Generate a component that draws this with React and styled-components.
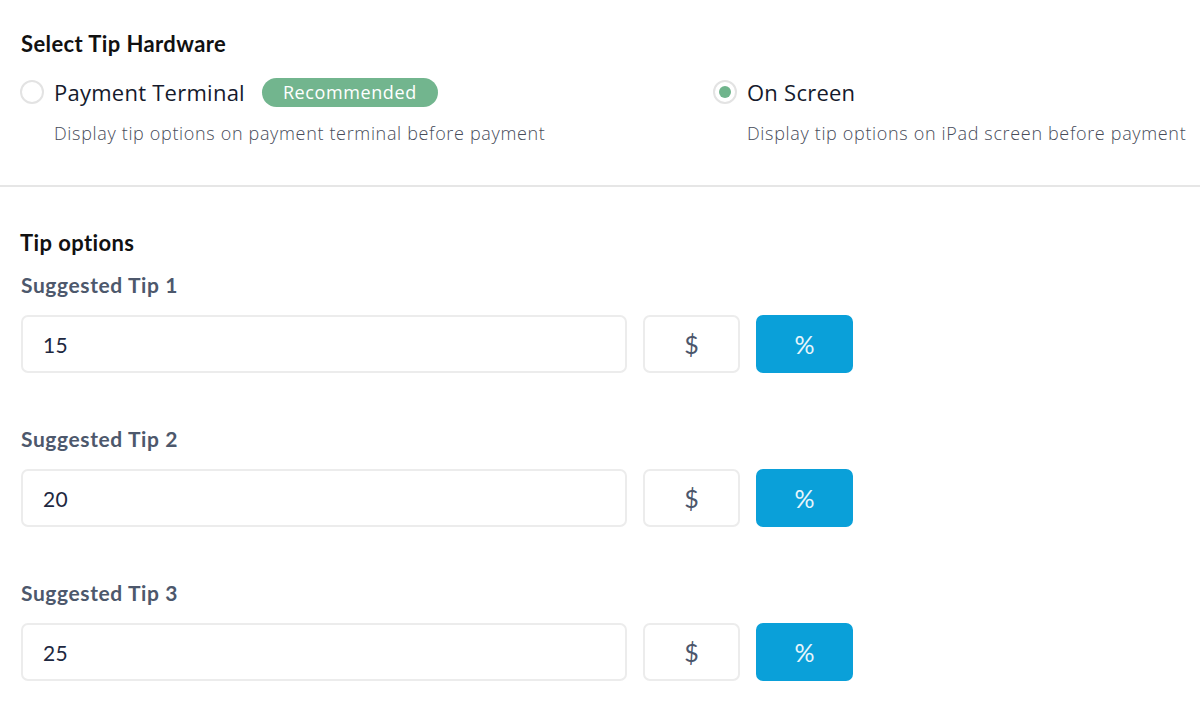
import React from "react";
import styled, { createGlobalStyle } from "styled-components";

const GlobalStyle = createGlobalStyle`
  body {
    margin: 0;
    background: #ffffff;
    font-family: "Open Sans", "Liberation Sans", sans-serif;
  }
`;

const Page = styled.div`
  width: 1200px;
  height: 719px;
  overflow: hidden;
  background: #fff;
`;

const HardwareSection = styled.section`
  padding: 30px 0 0 20px;
  height: 185px;
  box-sizing: border-box;
`;

const Heading = styled.h2`
  margin: 0;
  font-family: Lato, "Liberation Sans", sans-serif;
  font-weight: 700;
  font-size: 22px;
  line-height: 28px;
  letter-spacing: 0.4px;
  color: #111;
  padding-left: ${props => props.indent || "1px"};
`;

const Options = styled.div`
  display: flex;
  margin-top: 19px;
`;

const Option = styled.div`
  width: ${props => props.width};
  display: flex;
  flex-direction: column;
`;

const OptionRow = styled.label`
  display: flex;
  align-items: center;
  height: 30px;
`;

const Radio = styled.span`
  width: 20px;
  height: 20px;
  border-radius: 50%;
  border: 2px solid #e3e3e3;
  background: #fff;
  display: flex;
  align-items: center;
  justify-content: center;
  flex-shrink: 0;
  margin-right: 10px;

  &::after {
    content: "";
    display: ${props => (props.checked ? "block" : "none")};
    width: 12px;
    height: 12px;
    border-radius: 50%;
    background: #6fb48c;
  }
`;

const OptionTitle = styled.span`
  font-size: 22px;
  color: #151a2c;
  letter-spacing: 0.25px;
`;

const Badge = styled.span`
  margin-left: 17px;
  height: 29px;
  padding: 0 21px;
  border-radius: 15px;
  background: #72b58e;
  color: #fff;
  font-size: 18px;
  letter-spacing: 0.6px;
  display: flex;
  align-items: center;
`;

const OptionDesc = styled.p`
  margin: 14px 0 0 34px;
  font-size: 18px;
  font-weight: 300;
  line-height: 24px;
  letter-spacing: 0.66px;
  color: #474c5a;
  white-space: nowrap;
`;

const Divider = styled.hr`
  margin: 0;
  border: 0;
  border-top: 2px solid #e6e6e6;
`;

const TipSection = styled.section`
  padding: 42px 0 0 20px;
`;

const TipGroup = styled.div`
  margin-top: ${props => props.top};
`;

const FieldLabel = styled.div`
  font-family: Lato, "Liberation Sans", sans-serif;
  font-weight: 700;
  font-size: 21px;
  line-height: 26px;
  letter-spacing: 0.6px;
  color: #4d586c;
  padding-left: 1px;
`;

const FieldRow = styled.div`
  display: flex;
  gap: 16px;
  margin-top: 17px;
  padding-left: 1px;
`;

const ValueBox = styled.div`
  width: 606px;
  height: 58px;
  box-sizing: border-box;
  border: 2px solid #ececec;
  border-radius: 7px;
  display: flex;
  align-items: center;
  padding-left: 20px;
  font-family: Lato, "Liberation Sans", sans-serif;
  font-size: 21px;
  letter-spacing: 0.3px;
  color: #1e2840;
`;

const UnitButton = styled.button`
  width: 97px;
  height: 58px;
  box-sizing: border-box;
  border-radius: 7px;
  border: 2px solid ${props => (props.active ? "#0aa0d9" : "#ececec")};
  background: ${props => (props.active ? "#0aa0d9" : "#fff")};
  color: ${props => (props.active ? "#e8f6fc" : "#4b566b")};
  font-family: Lato, "Liberation Sans", sans-serif;
  font-size: 25px;
  padding: 0;
  cursor: pointer;
`;

const tips = [
  { label: "Suggested Tip 1", value: "15" },
  { label: "Suggested Tip 2", value: "20" },
  { label: "Suggested Tip 3", value: "25" },
];

function App() {
  return (
    <Page>
      <GlobalStyle />
      <HardwareSection>
        <Heading>Select Tip Hardware</Heading>
        <Options>
          <Option width="693px">
            <OptionRow>
              <Radio />
              <OptionTitle>Payment Terminal</OptionTitle>
              <Badge>Recommended</Badge>
            </OptionRow>
            <OptionDesc>Display tip options on payment terminal before payment</OptionDesc>
          </Option>
          <Option width="480px">
            <OptionRow>
              <Radio checked />
              <OptionTitle>On Screen</OptionTitle>
            </OptionRow>
            <OptionDesc>Display tip options on iPad screen before payment</OptionDesc>
          </Option>
        </Options>
      </HardwareSection>
      <Divider />
      <TipSection>
        <Heading as="h3" indent="0px">Tip options</Heading>
        {tips.map((tip, index) => (
          <TipGroup key={index} top={index === 0 ? "15px" : "53px"}>
            <FieldLabel>{tip.label}</FieldLabel>
            <FieldRow>
              <ValueBox>{tip.value}</ValueBox>
              <UnitButton>$</UnitButton>
              <UnitButton active>%</UnitButton>
            </FieldRow>
          </TipGroup>
        ))}
      </TipSection>
    </Page>
  );
}

export default App;
